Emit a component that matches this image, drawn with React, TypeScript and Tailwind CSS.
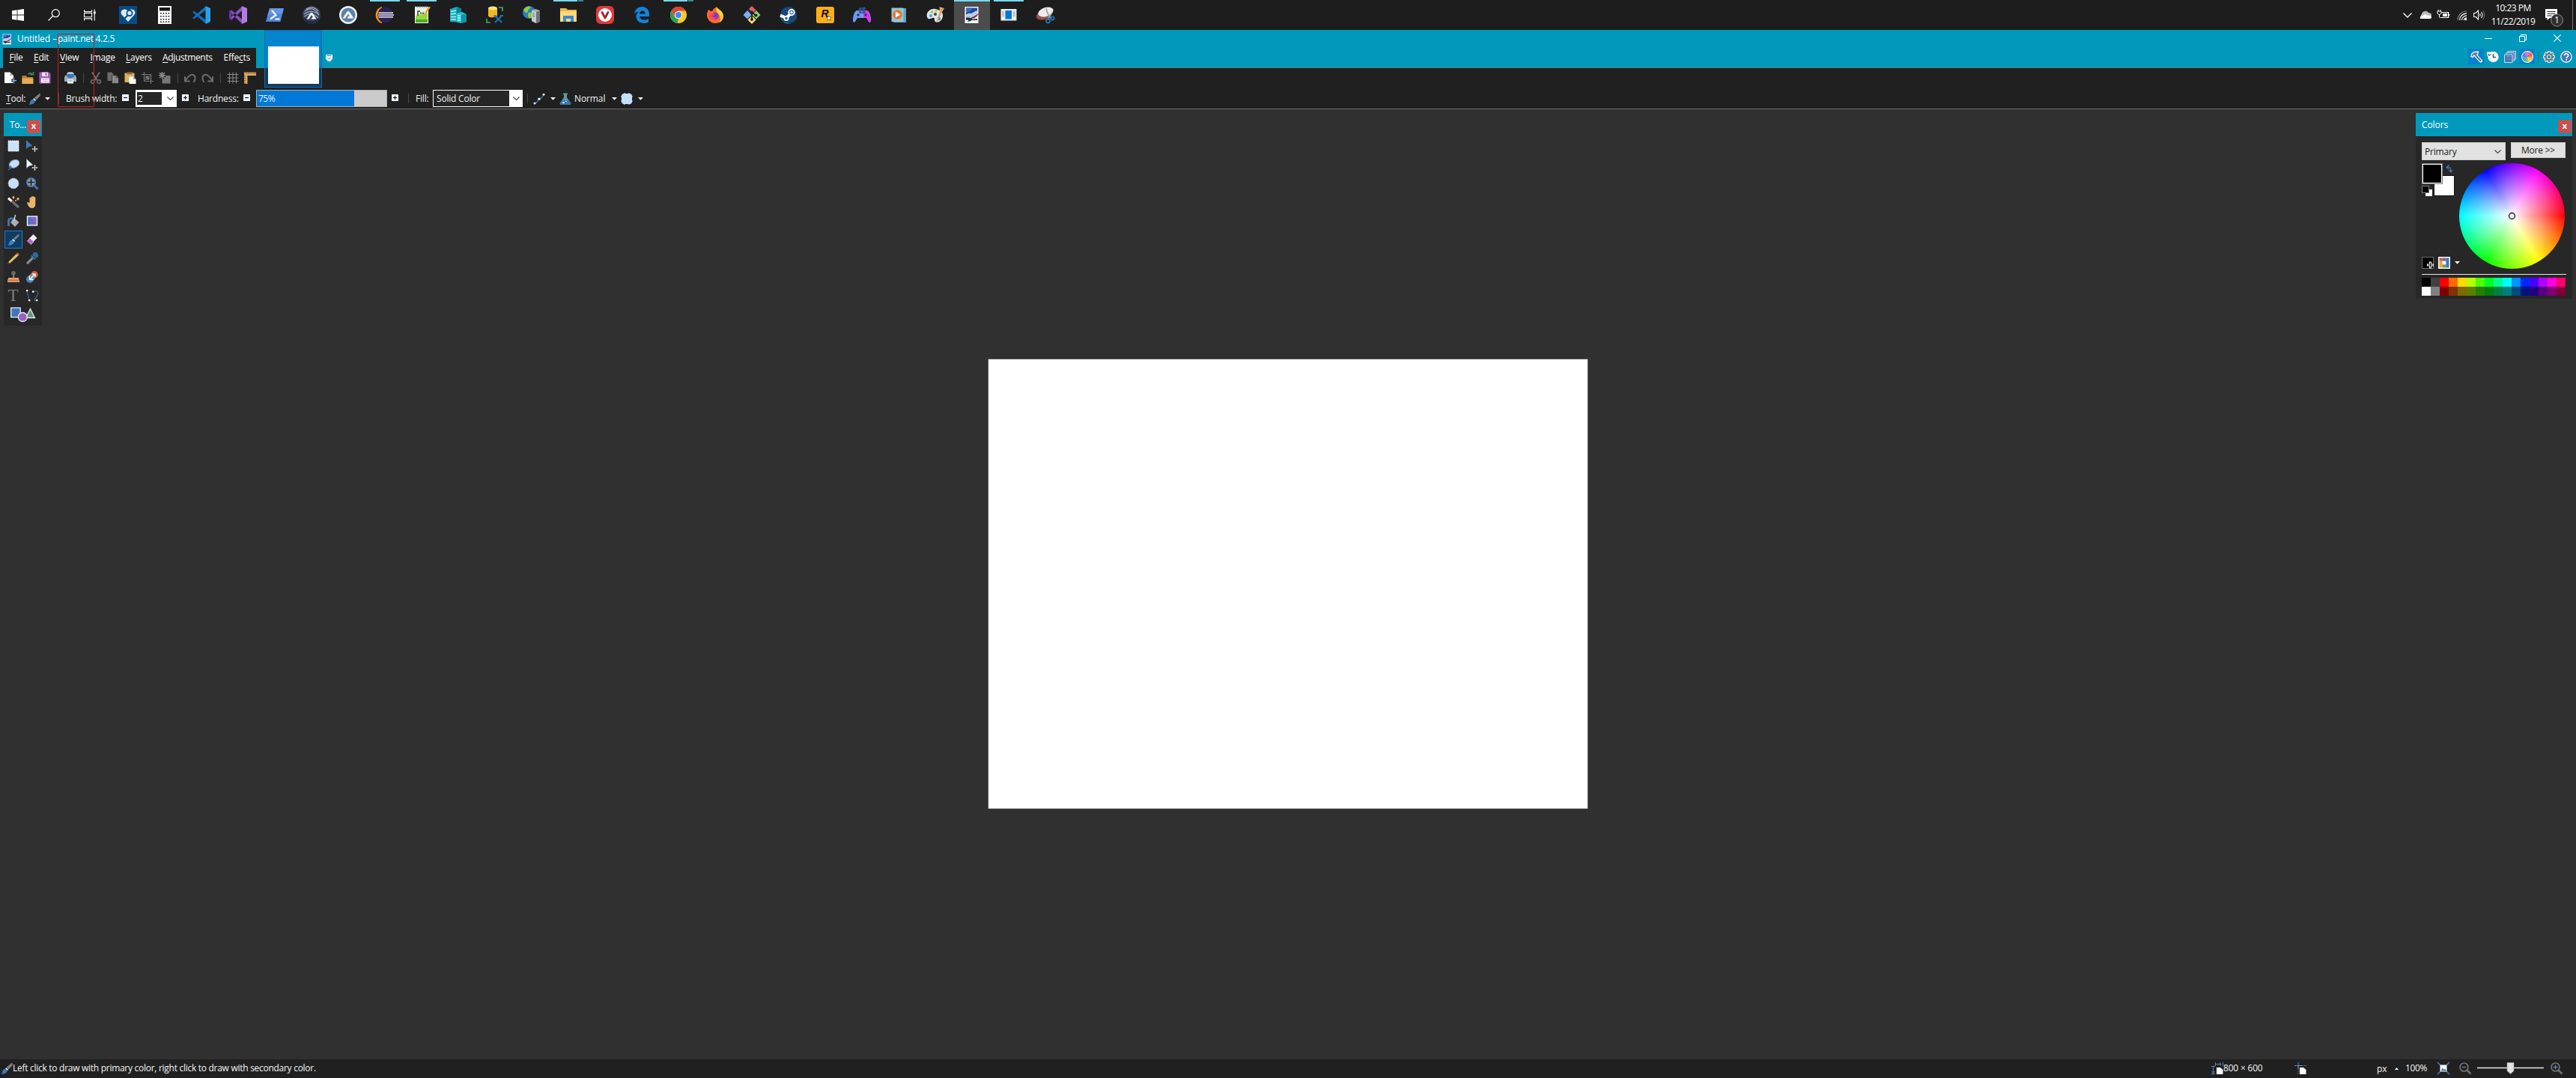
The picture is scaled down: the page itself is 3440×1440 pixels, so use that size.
import React from "react";

type P = { children?: React.ReactNode; c?: string; vb?: string };

const Svg = ({ children, c = "h-4 w-4", vb = "0 0 16 16" }: P) => (
  <svg viewBox={vb} className={`${c} block shrink-0 overflow-visible`} fill="none">
    {children}
  </svg>
);
const Svg24 = ({ children }: { children: React.ReactNode }) => (
  <Svg c="h-6 w-6" vb="0 0 24 24">{children}</Svg>
);

/* ---------- shared small glyphs ---------- */
const Brush = () => (
  <Svg>
    <path d="M15.500.300 15.800 4l-5 5.200-3-2.600z" fill="#7d7d7d" />
    <path d="m7.400 7 2.800 2.600-1.200 1.600-3-2.700z" fill="#c9d6e6" />
    <path d="M5.800 8.800 8.600 11.300C8.400 14.600 5 16 0 15.700c2.400-1.200 1.800-2.700 2.700-4.600.6-1.400 1.800-2.200 3.100-2.300z" fill="#3f78b8" />
  </Svg>
);
const Caret = () => (
  <Svg c="h-[4px] w-[7px]" vb="0 0 7 4"><path d="M0 0h7L3.500 3.800z" fill="#f0f0f0" /></Svg>
);
const Sign = ({ plus = false }) => (
  <div className="pb-[2px]">
    <Svg c="h-[9px] w-[9px]" vb="0 0 9 9">
      <rect width="9" height="9" rx=".6" fill="#eef4ff" />
      <path d="M2 4.500h5" stroke="#101820" strokeWidth="1.200" />
      {plus && <path d="M4.500 2v5" stroke="#101820" strokeWidth="1.200" />}
    </Svg>
  </div>
);
const Chevron = () => (
  <Svg c="h-[5px] w-[9px]" vb="0 0 9 5"><path d="m.5.5 4 4 4-4" stroke="#444" strokeWidth="1.100" /></Svg>
);
const PaintNet = () => (
  <>
    <rect x="2.500" y="1" width="18" height="22" fill="#f5f7fa" />
    <rect x="4" y="2.500" width="15" height="12" fill="#1d4b9b" />
    <path d="M4 2.500h9l-3 4-6 3z" fill="#3f6dbb" />
    <path d="M4 12c3-4 6-1 9-3s4-3 6-2v7.500H4z" fill="#b9cdec" />
    <path d="M4 15.500h5l3 2.500 7-1v2H9l-5-.500z" fill="#1b2130" />
    <path d="M24 8 14.500 17l-2.500-1.500z" fill="#9b1f3c" />
    <path d="m14 15-3.500 5-4.500 1 3.500-5z" fill="#21304f" />
  </>
);

/* ---------- taskbar ---------- */
type Task = { icon: React.ReactNode; run?: "one" | "many" | "active" };

const AutoIt = ({ dark = false }) => (
  <>
    <circle cx="12" cy="12" r="12" fill={dark ? "#39445f" : "#f2f4f6"} />
    {dark ? (
      <>
        <path d="M3 7c6-5 13-4 18 3M2 11c6-5 14-5 20 1M2 15c5-6 12-6 19 1M5 4c6-3 12-2 16 3" stroke="#a6abb8" strokeWidth="1.100" />
        <path d="M1 12a11 11 0 0 0 22 2c-3 4-5 6-11 6S3 17 1 12z" fill="#161b33" opacity=".6" />
        <path d="m5.500 17.500 5-8q1.500-1.500 3 0l5 8h-7l1.500-2.500h1L12 12l-3.500 5.500z" fill="#f4f4f4" />
      </>
    ) : (
      <>
        <circle cx="12" cy="12" r="9.600" fill="#5b82ad" />
        <path d="M4.500 16.500 10.500 7.500q1.500-1.500 3 0l6 9h-9l2-3h1.500L12 10.500l-4 6z" fill="#f7f7f7" />
      </>
    )}
  </>
);

const tasks: Task[] = [
  {
    icon: (
      <>
        <rect width="24" height="24" fill="#0b4a82" />
        <path d="M12 21 3.500 11.500C0 6.500 7 1.500 12 6.500c5-5 12 0 8.500 5z" fill="#d9ebf8" />
        <circle cx="14" cy="9.500" r="3.600" stroke="#0b4a82" strokeWidth="1.800" />
        <path d="m11.500 12.500-5 5" stroke="#0b4a82" strokeWidth="2.200" />
      </>
    ),
  },
  {
    icon: (
      <>
        <rect x="3" width="18" height="24" fill="#fff" />
        <rect x="5" y="2" width="14" height="4.500" fill="#181818" />
        {[9, 13, 17, 20.5].map((y) =>
          [6, 9.5, 13, 16.5].map((x) => <rect key={`${x}-${y}`} x={x} y={y} width="1.800" height="1.500" fill="#181818" />),
        )}
      </>
    ),
  },
  {
    icon: (
      <>
        <path d="M0 8.200 2 6.500l17 13-1.500 4z" fill="#0f6cb3" />
        <path d="M0 16 2 17.500 19 4.500 17.500.500z" fill="#1272b8" />
        <path d="M17.500 0 24 3v18l-6.500 3z" fill="#2ba1e8" />
      </>
    ),
  },
  {
    icon: (
      <>
        <path d="M0 7 3 5.500l15 13-1 5zM0 17l3 1.500 15-13L17 .5z" fill="#8a4fc4" />
        <path d="M0 7 3 5.500v13L0 17z" fill="#6d2fae" />
        <path d="M17 0 24 3v18l-7 3z" fill="#b17be4" />
      </>
    ),
  },
  {
    icon: (
      <>
        <path d="M5 3h19l-4.500 18H0z" fill="#4f86de" />
        <path d="M5 3h19l-2 8C15 8 9 12 2 13z" fill="#79a5ea" opacity=".5" />
        <path d="m8 6 5.500 6L6 17.500M12.500 17.500h6" stroke="#fff" strokeWidth="2.200" />
      </>
    ),
  },
  { icon: <AutoIt dark /> },
  { icon: <AutoIt /> },
  {
    run: "one",
    icon: (
      <>
        <path d="M8 1.500A11 11 0 0 0 8 22.500 12 12 0 0 1 8 1.500z" fill="#f7941e" stroke="#f7941e" strokeWidth="1.300" />
        <circle cx="13" cy="12" r="10.300" fill="#2c2255" />
        <path d="M3.500 9.300H23M3 12h21M3.500 14.800H23" stroke="#f4f0fa" strokeWidth="1.600" />
      </>
    ),
  },
  {
    run: "one",
    icon: (
      <>
        <path d="M3 1h18v22H3z" fill="#e9f1e4" />
        <path d="M4 13c6-3 11-2 16-3v12H4z" fill="#8fdc3c" />
        <path d="M4 18h16v4H4z" fill="#49ad22" />
        <path d="M3 1.500h18" stroke="#9ba7a0" strokeDasharray="1.500 1.500" strokeWidth="2" />
        <path d="M7 6v7M8 7h2M10 9.500h2M13 9.500h2" stroke="#222" strokeWidth="1.300" />
        <path d="M24 1.500 16 14l-2 1 .5-3L21 1z" fill="#e7a431" />
        <path d="M3.500 1v21.500h17V9" stroke="#f6f6f6" />
      </>
    ),
  },
  {
    icon: (
      <>
        <path d="m1 4 9-3 6 2.500V22L1 21z" fill="#17a9bd" />
        <path d="m10 1 6 2.500V22l-6 .5z" fill="#0c8395" />
        <path d="M2 7.500 9 6M2 11l7-1M2 14.500h7M2 18h7" stroke="#b8f4f7" strokeWidth="1.500" />
        <path d="m10 10 7-2 6 3v10l-7 2-6-2z" fill="#25c4d4" />
        <path d="m16 11.500 7-.5v10l-7 2z" fill="#0f93a6" />
        <path d="M11 13h4M11 16h4M11 19h4" stroke="#c6fafc" strokeWidth="1.300" />
      </>
    ),
  },
  {
    icon: (
      <>
        <path d="M3 3v10c0 3 11 3 12 0V3z" fill="#f4b81c" />
        <ellipse cx="9" cy="3" rx="6" ry="2.500" fill="#ffe277" />
        <path d="M17 2h5v5M1 17v5h5" stroke="#4fa557" strokeWidth="1.700" />
        <path d="m12 13 9 9M21 13l-9 9" stroke="#1c6fb8" strokeWidth="2.300" />
        <path d="M10 13.500h4M19 13h4" stroke="#1c6fb8" strokeWidth="1.800" />
      </>
    ),
  },
  {
    icon: (
      <>
        <circle cx="8.500" cy="8.500" r="8.500" fill="#2e7bc4" />
        <path d="M1 5c3-4 6-5 9-4 1 3-3 3-3 6s-4 3-6-2zM8 9c3-1 6 0 6 3s-3 5-5 4-3-5-1-7z" fill="#8ccf3c" />
        <path d="m12 6 5-2 6 2v15l-5 2-6-3z" fill="#a9adb1" />
        <path d="m18 8 5-2v15l-5 2z" fill="#6d7377" />
        <path d="m12 6 6 2v15l-6-3z" fill="#c7cacd" />
        <path d="m13 10 3 1M13 13l3 1" stroke="#666" />
      </>
    ),
  },
  {
    run: "many",
    icon: (
      <>
        <path d="M1 3h8l2 2h12v16H1z" fill="#e9b44a" />
        <path d="M1 7h22v14H1z" fill="#ffd978" />
        <path d="M5 13h14v8h-4v-4H9v4H5z" fill="#3b8ad0" />
      </>
    ),
  },
  {
    icon: (
      <>
        <rect width="24" height="24" rx="6" fill="#e0393e" />
        <circle cx="12" cy="12" r="9" fill="#fff" />
        <path d="m8 8.500 4 7.500 4-7.500" stroke="#a5252c" strokeWidth="2.800" strokeLinecap="round" strokeLinejoin="round" />
      </>
    ),
  },
  {
    icon: (
      <path
        d="M2 10.500C3 4.500 7 1 12.500 1 18.500 1 22 5.500 22 11v3H9c.4 3 3 4.500 6.500 4.500 2.300 0 4-.5 5.500-1.500v4.500c-2 1-4 1.500-6.500 1.500C8.500 23 4.500 19 4.500 14c0-2.500 1.200-5 3.500-6.500-2.500.2-4.500 1-6 3zM9 10.500h7.500C16.500 8 15 6.500 13 6.500s-3.600 1.500-4 4z"
        fill="#1282dc"
      />
    ),
  },
  {
    run: "many",
    icon: (
      <>
        <circle cx="12" cy="12" r="11" fill="#fbc91d" />
        <path d="M2.500 6.500A11 11 0 0 1 21.500 6.500H12L7.500 14.500z" fill="#e04336" />
        <path d="M2.500 6.500 7.300 14.700 12 17 10.500 23A11 11 0 0 1 2.500 6.500z" fill="#2fa250" />
        <circle cx="12" cy="12" r="5.200" fill="#f3f3f3" />
        <circle cx="12" cy="12" r="4" fill="#4688ef" />
      </>
    ),
  },
  {
    icon: (
      <>
        <path d="M3 5c2 1 3 2 5 2 2-4 5-5 6-6 0 3 8 4 9 12 0 7-5 10-11 10S1 18 1 12c0-3 1-5 2-7z" fill="#ff6a2a" />
        <path d="M14 1c0 3 8 4 9 12 0 4-2 7-5 9 2-5 1-9-2-12-2-2-3-5-2-9z" fill="#ffd33d" />
        <circle cx="11.500" cy="13.500" r="5" fill="#7a3bd1" />
        <path d="M4 10c3-1 5-1 8 1-2 1-2 2-4 2 1 3 4 3 6 2-1 4-8 4-10-1z" fill="#ff4a5a" />
      </>
    ),
  },
  {
    icon: (
      <>
        <path d="m12 0 5.500 5.500L12 11 6.500 5.500z" fill="#e85f5a" />
        <path d="m6 6 5.500 6L6 17.500.5 12z" fill="#77b1ef" />
        <path d="m18 6 5.500 6-5.500 5.500-5.500-5.500z" fill="#8bd36b" />
        <path d="m12 13 5.500 5.500L12 24l-5.500-5.500z" fill="#ffe36b" />
        <path d="M6 3.500 12 9v10M12 8l5.500 5" stroke="#222" strokeWidth="1.800" />
        <circle cx="12" cy="8.500" r="2" fill="#222" /><circle cx="12" cy="18" r="2" fill="#222" /><circle cx="17.500" cy="12.500" r="2" fill="#222" />
      </>
    ),
  },
  {
    icon: (
      <>
        <circle cx="12" cy="12" r="11" fill="#17477d" />
        <path d="M1 12A11 11 0 0 0 23 13.500L20 21Q12 26 4 20z" fill="#1c82bd" />
        <path d="m1 12.500 8 3.500 6-6" stroke="#fff" strokeWidth="4" />
        <circle cx="16" cy="8.500" r="4.700" fill="#fff" /><circle cx="16" cy="8.500" r="2.700" fill="#17477d" /><circle cx="16" cy="8.500" r="1.800" fill="#fff" />
        <circle cx="9" cy="16.500" r="3.500" fill="#fff" /><circle cx="9" cy="16.500" r="1.700" fill="#1b6098" />
      </>
    ),
  },
  {
    icon: (
      <>
        <rect y="1" width="24" height="22" rx="3" fill="#fcaf17" />
        <text x="6.500" y="14.500" fontSize="14" fontWeight="900" fontStyle="italic" fontFamily="Liberation Sans, sans-serif" fill="#111">R</text>
        <path d="m17 13 1 2 2.200.3-1.600 1.600.4 2.300-2-1.200-2 1.200.4-2.300-1.600-1.600 2.200-.3z" fill="#fff" stroke="#111" strokeWidth=".5" />
      </>
    ),
  },
  {
    icon: (
      <>
        <path d="M5 6h14c4 2 5 9 5 14-1 3-3 2-4-1l-2-3H6l-2 3c-1 3-3 4-4 1C0 15 1 8 5 6z" fill="#6c9af2" />
        <path d="M14 6h5c4 2 5 9 5 14-1 3-3 2-4-1l-2-3h-4z" fill="#d33ce8" />
        <path d="m8 2.500 3.500-.5v3.500H8zM12.500 2l4-.5v4h-4zM8 6.500h3.500V10L8 9.500zM12.500 6.500h4v4l-4-.5z" fill="#36539a" />
        <circle cx="7" cy="12" r="1.800" fill="#28396b" /><circle cx="17" cy="12" r="1.800" fill="#5a1f78" />
      </>
    ),
  },
  {
    icon: (
      <>
        <path d="M5 3h17v19H5z" fill="#5fa6c3" /><path d="M2.500 2.500h16v18.500h-16z" fill="#93c6da" />
        <circle cx="10.500" cy="11.500" r="6.300" fill="#e8752a" /><path d="m8 7.500 6.500 4L8 15.500z" fill="#fff" />
      </>
    ),
  },
  {
    icon: (
      <>
        <path d="M1 15C-1 8 6 3 12 4s11 4 10 10-6 9-10 7c-2-1 0-4-2-5s-7 4-9-1z" fill="#dfe5ea" />
        <circle cx="6" cy="13" r="2" fill="#4aa3e0" /><circle cx="7.500" cy="8" r="1.800" fill="#9ac93c" /><circle cx="13" cy="6.500" r="1.800" fill="#e8c33c" />
        <circle cx="12" cy="11" r="2" fill="#3b4650" /><circle cx="17" cy="17" r="2.200" fill="#4d8ccd" />
        <path d="M17.500 1 24 3l-3 5-7 14-1 0 5-14z" fill="#d8a35c" />
      </>
    ),
  },
  { run: "active", icon: <PaintNet /> },
  {
    run: "one",
    icon: (
      <>
        <rect x="1.500" y="4" width="21" height="15.500" fill="#e9edf1" />
        <rect x="7.500" y="6" width="8.500" height="11.500" fill="#0078d7" />
        <path d="M3 8h3M3 10.500h3M3 13h3M17.500 8H21M17.500 10.500H21M17.500 13H21" stroke="#8b98a6" />
      </>
    ),
  },
  {
    icon: (
      <>
        <ellipse cx="10" cy="12" rx="10.500" ry="6" transform="rotate(-18 10 12)" fill="#96504f" />
        <ellipse cx="12.500" cy="8" rx="10.500" ry="6" transform="rotate(-18 12.500 8)" fill="#eee9ea" />
        <path d="M13 3c1 6 4 11 7 14M21 9l-6 9" stroke="#9a9fa6" strokeWidth="1.600" />
        <circle cx="15.500" cy="20" r="2.500" stroke="#2474b3" strokeWidth="1.800" /><circle cx="21.500" cy="16.500" r="2.200" stroke="#2474b3" strokeWidth="1.800" />
      </>
    ),
  },
];

const Taskbar = () => (
  <header className="flex h-10 shrink-0 bg-[#1d1d1d]">
    <div className="flex h-10 w-12 items-center justify-center">
      <Svg><path d="M0 2.300 6.600 1.300v6.200H0zM7.400 1.200 16 0v7.500H7.400zM0 8.400h6.600v6.300L0 13.700zM7.400 8.400H16V16l-8.600-1.200z" fill="#fff" /></Svg>
    </div>
    <div className="flex h-10 w-12 items-center justify-center">
      <Svg><circle cx="10.300" cy="5.700" r="5" stroke="#fff" strokeWidth="1.200" /><path d="M6.700 9.300.4 15.600" stroke="#fff" strokeWidth="1.300" /></Svg>
    </div>
    <div className="mr-[3px] flex h-10 w-12 items-center justify-center">
      <Svg>
        <path d="M.6 1v2.600h10V1M.6 15.500v-2.600h10v2.600M.6 5.500h10v5.300H.6zM14.300.5v15" stroke="#fff" strokeWidth="1.100" />
        <path d="M12.800 3.500h3v2.800h-3z" fill="#fff" />
      </Svg>
    </div>
    <div className="flex gap-px">
      {tasks.map((t, i) => (
        <div key={i} className={`flex h-10 w-12 flex-col items-center ${t.run === "active" ? "bg-[#4c4c4c]" : ""}`}>
          <div className={`mb-[6px] flex h-[2px] justify-end ${t.run === "active" ? "w-12 bg-[#76d9f0]" : t.run ? "w-10 bg-[#76d9f0]" : "w-10"}`}>
            {t.run === "many" && <div className="w-2 border-l border-[#1d1d1d] bg-[#3f8798]" />}
          </div>
          <Svg24>{t.icon}</Svg24>
        </div>
      ))}
    </div>
    <div className="ml-auto flex items-center pr-[4px] text-white">
      <Svg c="h-[7px] w-3" vb="0 0 12 7"><path d="m.5.5 5.500 5.500 5.500-5.500" stroke="#fff" strokeWidth="1.300" /></Svg>
      <div className="ml-[10px]"><Svg><path d="M3 12a3 3 0 0 1 0-5 5 5 0 0 1 9-2 3.500 3.500 0 0 1 4 3.500A3 3 0 0 1 13 12z" fill="#b9b9b9" /><path d="M1 13c-1-3 1-4 3-3.500 2-3 5-2.500 6-1 3-.5 6 1 6 2.500s-1 2-2 2z" fill="#fff" /></Svg></div>
      <div className="ml-[8px]">
        <Svg>
          <path d="M5.500 4.500h9v7H3.500M15.500 6.500v3" stroke="#fff" strokeWidth="1.200" /><path d="M7 6h6v4H7z" fill="#fff" />
          <path d="M0 3h5v3L3.500 7.500h-2L0 6zM1 1v2M4 1v2M2.500 7v4.500" stroke="#fff" />
        </Svg>
      </div>
      <div className="ml-[10px]">
        <Svg>
          <path d="M1 15A12 12 0 0 1 13 3" stroke="#888" strokeWidth="1.200" /><path d="M3.500 15A9.500 9.500 0 0 1 13 5.800M6.500 15A6.500 6.500 0 0 1 13 8.800M9.500 15A3.500 3.500 0 0 1 13 11.800" stroke="#fff" strokeWidth="1.200" />
          <circle cx="12" cy="14" r="1.300" fill="#fff" />
        </Svg>
      </div>
      <div className="ml-[6px]">
        <Svg>
          <path d="M.6 5.500H3L6.500 2v12L3 10.500H.6z" stroke="#fff" strokeWidth="1.100" /><path d="M8.500 6q1.500 2 0 4M10.500 4q3 4 0 8" stroke="#fff" strokeWidth="1.100" /><path d="M12.800 2q4 6 0 12" stroke="#777" />
        </Svg>
      </div>
      <div className="ml-[6px] flex w-[62px] flex-col items-center text-[12px] leading-[18px] tracking-[-0.5px]">
        <span>10:23 PM</span>
        <span>11/22/2019</span>
      </div>
      <div className="ml-[12px] mt-[8px]">
        <Svg c="h-6 w-6" vb="0 0 24 24">
          <path d="M0 0h16v12H6l-3.500 3v-3H0z" fill="#fff" /><path d="M2.500 3.500h11M2.500 6.300h11M2.500 9h6" stroke="#222" strokeWidth="1.100" />
          <circle cx="15.500" cy="15" r="8" fill="#303030" stroke="#8d8d8d" />
          <text x="15.500" y="19.300" textAnchor="middle" fontSize="12" fill="#fff" fontFamily="Open Sans, sans-serif">1</text>
        </Svg>
      </div>
      <div className="ml-[12px] h-10 w-px bg-[#777]" />
    </div>
  </header>
);

/* ---------- title bar and menu ---------- */
const menus: [string, string, string, string][] = [
  ["", "F", "ile", "w-[32.500px]"],
  ["", "E", "dit", "w-[35px]"],
  ["", "V", "iew", "w-[40.500px]"],
  ["", "I", "mage", "w-[47.500px]"],
  ["", "L", "ayers", "w-[49px]"],
  ["", "A", "djustments", "w-[81.500px] tracking-[-0.35px]"],
  ["Effe", "c", "ts", "w-[40px]"],
];

const gearTeeth = [0, 45, 90, 135, 180, 225, 270, 315];

const TitleBar = () => (
  <section className="flex h-[51px] shrink-0 justify-between border-b border-[#5f7478] bg-[#0099bc]">
    <div>
      <div className="flex h-6 items-center pl-[2px] text-[12px] text-white">
        <Svg c="h-[15px] w-[15px]" vb="0 0 24 24"><PaintNet /></Svg>
        <span className="ml-[6px] w-[54px] whitespace-nowrap tracking-[-0.1px]">Untitled –</span>
        <span className="whitespace-nowrap tracking-[-0.28px]">paint.net 4.2.5</span>
      </div>
      <nav className="ml-1 flex h-[27px] w-[338px] items-center bg-[#202020] pb-px pl-[8.500px] text-[12px] tracking-[-0.25px] text-white">
        {menus.map(([a, k, b, w]) => (
          <span key={k} className={`${w} shrink-0 whitespace-nowrap`}>{a}<u className="underline-offset-2">{k}</u>{b}</span>
        ))}
      </nav>
    </div>
    <div className="flex flex-col items-end">
      <div className="flex h-[22px] items-center gap-[36px] pr-[20px]">
        <Svg c="h-[10px] w-[10px]" vb="0 0 10 10"><path d="M0 5.500h10" stroke="#fff" /></Svg>
        <Svg c="h-[10px] w-[10px]" vb="0 0 10 10"><path d="M.5 2.500h7v7h-7zM2.500 2.500v-2h7v7h-2" stroke="#fff" /></Svg>
        <Svg c="h-[10px] w-[10px]" vb="0 0 10 10"><path d="m.3.3 9.400 9.400M9.700.3.300 9.700" stroke="#fff" strokeWidth="1.100" /></Svg>
      </div>
      <div className="mt-[3px] flex h-[21px] items-center pr-[5px]">
        <div className="flex h-[21px] w-[21px] items-center justify-center bg-[#0083cc]">
          <Svg>
            <path d="m7.500 6.500 6.500 7" stroke="#fff" strokeWidth="4.200" strokeLinecap="round" />
            <path d="M.8 7.500C.8 3 4 .8 10.500 1.200L9.500 5 6.500 7.500 4.500 6 3.500 8.500z" fill="#6d7f8c" stroke="#fff" strokeWidth="1.200" />
            <path d="m7 6 7 7.500" stroke="#5d6d79" strokeWidth="2" />
          </Svg>
        </div>
        <div className="ml-[4px]">
          <Svg><circle cx="8.500" cy="8" r="7.200" fill="#fff" /><path d="M8.500 4v4.500H12" stroke="#40525e" strokeWidth="1.500" /><path d="M0 1.500h5.500V7L0 6z" fill="#fff" /><path d="M1 3.500 3 6l2.500-1.500" stroke="#40525e" strokeWidth="1.200" /></Svg>
        </div>
        <div className="ml-[7px]">
          <Svg><path d="M5 .5h10.500V11H5z" fill="#4679b4" stroke="#c9dcef" /><path d="M3 2.500h10.500V13H3z" fill="#4679b4" stroke="#c9dcef" /><path d="M.5 5H11v10.500H.5z" fill="#4679b4" stroke="#c9dcef" /><path d="M3 7.500h8V5M5 5v6h8V3" stroke="#7ea5d0" strokeWidth=".6" /></Svg>
        </div>
        <div className="ml-[4px] flex h-[21px] w-[21px] items-center justify-center bg-[#0083cc]">
          <div className="h-4 w-4 rounded-full border border-white bg-[conic-gradient(from_0deg,#f28ba0,#ef5350_60deg,#ff9f43_100deg,#f6d55c_150deg,#5ac97c_190deg,#4ea9e0_250deg,#8a6fe8_300deg,#d67be0)]" />
        </div>
        <div className="ml-[4px] h-[15px] w-px bg-[#2a6f84]" />
        <div className="ml-[6px]">
          <Svg>
            {gearTeeth.map((r) => <path key={r} d="M8 4V.2" stroke="#fff" strokeWidth="4" transform={`rotate(${r} 8 8)`} />)}
            <circle cx="8" cy="8" r="4.200" stroke="#fff" strokeWidth="4.200" />
            {gearTeeth.map((r) => <path key={r} d="M8 4V1" stroke="#65737b" strokeWidth="2" transform={`rotate(${r} 8 8)`} />)}
            <circle cx="8" cy="8" r="4.200" stroke="#65737b" strokeWidth="2.200" />
            <circle cx="8" cy="8" r="2.200" fill="#0099bc" />
          </Svg>
        </div>
        <div className="ml-[7px]">
          <Svg><circle cx="8" cy="8" r="7.200" fill="#3f78b8" stroke="#e8f0f8" strokeWidth="1.400" /><path d="M5.500 6.200C5.500 3 10.700 3 10.700 6c0 2-2.500 2-2.500 4M8.200 11v1.800" stroke="#fff" strokeWidth="1.700" /></Svg>
        </div>
      </div>
    </div>
  </section>
);

/* ---------- main toolbar ---------- */
const Sep = () => <div className="mx-[5px] h-[14px] w-px shrink-0 bg-[#484848]" />;

const actions: (React.ReactNode | "sep")[] = [
  <><path d="M0 .5h7.500L12 5v10H0z" fill="#fff" /><path d="M7.500.5V5H12z" fill="#a8b4c0" /><path d="M12.500 8v7M9 11.500h7" stroke="#202020" strokeWidth="3" /><path d="M12.500 8v7.500M8.800 11.700h7.200" stroke="#8fb6d8" strokeWidth="1.300" /></>,
  <><path d="M.5 5H6l1.500 2H15v9H.5z" fill="#b67e2e" /><path d="M.5 8.500h15V16H.5z" fill="#e6ad55" /><path d="M8.500 3.500C10 1 13 1 14 4M11.500 3.500h4V0" stroke="#3c9a74" strokeWidth="1.500" /></>,
  <><path d="M.5.5h13L15.500 3v12.500H.5z" fill="#a45fc0" /><path d="M4 .5h8V6H4z" fill="#efe4f5" /><path d="M8.500 1.500h2v3.500h-2z" fill="#a45fc0" /><path d="M3 8.500h10.500v6H3z" fill="#fff" /><path d="M4.500 10.500h7.500M4.500 12.500h7.500" stroke="#b99cc8" /></>,
  "sep",
  <><path d="M3.500 2 5 .5h6L12.500 2v4h-9z" fill="#e8edf3" /><path d="M1.500 4.500h13L16 7v6H0V7z" fill="#9eacbb" /><path d="M4 2.500h8l1 3.500-2 2H5L3 6z" fill="#3779bd" /><path d="M4 10h8v5.500H4z" fill="#f6f8fa" /><path d="M5 12h6" stroke="#68a5dc" strokeWidth="1.300" /></>,
  "sep",
  <><path d="M3 .5 9.500 11M13 .5 6.500 11" stroke="#707070" strokeWidth="2" /><circle cx="3.800" cy="13" r="2.300" stroke="#707070" strokeWidth="1.500" /><circle cx="12.200" cy="13" r="2.300" stroke="#707070" strokeWidth="1.500" /></>,
  <><path d="M.5.500H6L9 3.500V12H.5z" fill="#6c6c6c" /><path d="M6.500 4.500H12l3.500 3.500v7.500h-9z" fill="#898989" stroke="#202020" strokeWidth=".7" /><path d="M12 4.500V8h3.500" stroke="#444" /></>,
  <><path d="M.5 1.500h13V14H.5z" fill="#deae61" /><path d="M3.500.3h7v3h-7z" fill="#8b6a36" /><path d="M6.500 6.500H12l3.500 3.500v6h-9z" fill="#fff" /><path d="M12 6.500V10h3.500z" fill="#93a5b5" /></>,
  <><path d="M3.500 0v12.500H16M0 3.500h12.500V16" stroke="#777" strokeWidth="1.200" /><path d="M5.500 5.500h5v5h-5z" fill="#777" /><path d="M14 2 3 13" stroke="#555" strokeWidth=".7" /></>,
  <><path d="M4.500 5h11v10.500h-11z" fill="#767676" /><path d="m1 1 7 7M8 1 1 8" stroke="#202020" strokeWidth="4.500" /><path d="m1 1 7 7M8 1 1 8M4.500 0v9M0 4.500h9" stroke="#858585" strokeWidth="1.700" /></>,
  "sep",
  <path d="M1 6v6.500h6.500M1.500 12C5 6 9 3 12 4s3.500 6 .5 10" stroke="#6c6c6c" strokeWidth="2" />,
  <path d="M15 6v6.500H8.500M14.500 12C11 6 7 3 4 4S.5 10 3.500 14" stroke="#6c6c6c" strokeWidth="2" />,
  "sep",
  <path d="M3.500.5v15M8 .5v15M12.500.5v15M.5 3.500h15M.5 8h15M.5 12.500h15" stroke="#8b8b8b" />,
  <><path d="M0 .5h16V5H4.500v11H0z" fill="#deac62" /><path d="M3 .5V3M6 .5V3M9 .5V3M12 .5V3M14.500.5V3M0 6h2.500M0 9h2.500M0 12h2.500M0 15h2.500" stroke="#5f4318" strokeWidth=".8" /></>,
];

const MainToolbar = () => (
  <div className="flex h-[27px] items-center pb-px pl-[2.500px]">
    {actions.map((a, i) =>
      a === "sep" ? <Sep key={i} /> : <div key={i} className="flex w-[23px] shrink-0 justify-center"><Svg>{a}</Svg></div>,
    )}
  </div>
);

const ToolOptions = () => (
  <div className="flex h-[27px] items-center text-[12px] tracking-[-0.2px] text-[#f2f2f2]">
    <span className="ml-[8px] w-[30px] whitespace-nowrap"><u className="underline-offset-2">T</u>ool:</span>
    <Brush />
    <div className="ml-[6px] w-[7px]"><Caret /></div>
    <div className="ml-[11px] h-[15px] w-px bg-[#484848]" />
    <span className="ml-[9px] w-[75px] whitespace-nowrap">Brush width:</span>
    <Sign />
    <div className="ml-[9px] flex h-[23px] w-[55px] items-center border border-white bg-white">
      <div className="ml-px flex h-[17px] w-[33px] items-center bg-[#262626] pl-[1px]">2</div>
      <div className="ml-[7px]"><Chevron /></div>
    </div>
    <div className="ml-[7px]"><Sign plus /></div>
    <span className="ml-[12px] w-[61px] whitespace-nowrap">Hardness:</span>
    <Sign />
    <div className="ml-[8px] flex h-[23px] w-[175px] border border-[#adadad] bg-[#cbcbcb]">
      <div className="flex w-[130px] items-center bg-[#0078d7] pl-[2px] tracking-[-0.5px]">75%</div>
    </div>
    <div className="ml-[6px]"><Sign plus /></div>
    <div className="ml-[13px] h-[13px] w-px bg-[#484848]" />
    <span className="ml-[9px] w-[23px] whitespace-nowrap">Fill:</span>
    <div className="flex h-[23px] w-[120px] items-center border border-white bg-white">
      <div className="flex h-[21px] w-[101px] items-center bg-[#262626] pl-[4px]">Solid Color</div>
      <div className="ml-[5px]"><Chevron /></div>
    </div>
    <div className="ml-[6px] h-[13px] w-px bg-[#484848]" />
    <div className="ml-[7px]">
      <Svg><path d="M2 14C6 14 6 9 8 8s4 0 6-6" stroke="#3f78b8" strokeWidth="1.200" /><circle cx="2" cy="14" r="1.500" fill="#dbe9f8" /><circle cx="8" cy="8.300" r="1.700" fill="#dbe9f8" /><circle cx="14" cy="2.300" r="1.500" fill="#dbe9f8" /></Svg>
    </div>
    <div className="ml-[7px]"><Caret /></div>
    <div className="ml-[5px]">
      <Svg><path d="M5 .5h6v1.800H10v4l5.500 7.700-.8 1.800H1.300L.5 14 6 6.300v-4H5z" fill="#6398a1" /><path d="M3.500 10h9l3 4-.8 1.800H1.300L.5 14z" fill="#3775b5" /><circle cx="5.500" cy="13" r="1.300" fill="#fff" /><circle cx="9" cy="11.500" r=".8" fill="#fff" /></Svg>
    </div>
    <span className="ml-[4px] w-[50px] tracking-[-0.1px]">Normal</span>
    <Caret />
    <div className="ml-[5px]">
      <Svg><rect x="1" y="1" width="14" height="14" rx="3.500" fill="#c4e0fa" /><path d="M5 0v2M11 0v2M5 14v2M11 14v2M0 5h2M0 11h2M14 5h2M14 11h2" stroke="#d9ecfb" /></Svg>
    </div>
    <div className="ml-[7px]"><Caret /></div>
  </div>
);

/* ---------- tool palette ---------- */
const MoveCross = () => (
  <>
    <path d="M11.500 8.500v7M8 12h7" stroke="#e8e8e8" />
    <path d="m11.500 8 1.300 1.800h-2.600zM11.500 16l1.300-1.800h-2.600zM7.500 12l1.800-1.300v2.600zM15.500 12l-1.800-1.300v2.600z" fill="#e8e8e8" />
  </>
);

const tools: React.ReactNode[] = [
  <rect x="1" y="1" width="14" height="14" fill="#c9e3fb" stroke="#fff" strokeDasharray="1.500 1" />,
  <><path d="M0 0v12l3.500-3 5-1z" fill="#3f78b8" /><MoveCross /></>,
  <><ellipse cx="9" cy="6.800" rx="7" ry="5" transform="rotate(-25 9 6.800)" fill="#c4e0fa" stroke="#80a5c7" /><path d="M1 15.500c0-3 5-1 4-4.500-1-2-4-1-2 1" stroke="#3f78b8" strokeWidth="1.200" /></>,
  <><path d="M.5.5v12l3.500-3 5-1z" fill="#fff" stroke="#6ca0d0" strokeWidth=".6" /><MoveCross /></>,
  <circle cx="8" cy="8" r="6.800" fill="#c4e0fa" stroke="#e5f2fd" strokeDasharray="1.500 1" />,
  <><path d="m10.500 10.500 5 5" stroke="#3f78b8" strokeWidth="2.800" /><circle cx="6.500" cy="6.500" r="5.800" fill="#8f9ba8" stroke="#3f78b8" strokeWidth="1.600" /><path d="M6.500 2v9M2 6.500h9" stroke="#222" strokeWidth="1.700" /></>,
  <><path d="m2 3.500 13 11.500" stroke="#707070" strokeWidth="3.200" /><path d="m1 2.700 4.500 4" stroke="#fff" strokeWidth="3" /><path d="m8 0 1 1.500L8 3.500 6.800 1.500zM14 2l1.500 1.500L14 5.500l-1.500-2zM11 5l.8.8-.8.9-.8-.9z" fill="#e6b45c" stroke="#e6b45c" /></>,
  <path d="M4.500 9V3.200c0-1.500 1.800-1.500 1.800 0V1.700c0-1.500 2-1.500 2 0v-.5c0-1.500 2-1.500 2 0v1c0-1.500 2-1.500 2 .2V10c0 4-1.500 6-4.500 6-4 0-5-3-6.500-6.500-.6-1.500 1.200-2 2-1z" fill="#e9b768" />,
  <><path d="m8.500 4 7 6-5.500 6-6-6z" fill="#adadad" /><path d="M10.500 0 8.500 8" stroke="#ddd" strokeWidth="1.400" /><path d="M1.500 15V7.500c0-2 3-3.500 7-2" stroke="#3f78b8" strokeWidth="2.800" /></>,
  <><defs><linearGradient id="fillGrad"><stop stopColor="#3f78c4" /><stop offset="1" stopColor="#a05fc8" /></linearGradient></defs><rect x="1.500" y="2" width="13" height="12" fill="url(#fillGrad)" stroke="#fff" strokeWidth="1.300" /></>,
  <><path d="m15.500 0-.2 3.500-5 5-2.500-2z" fill="#7f7f7f" /><path d="m7.400 7 2.800 2.600-1.200 1.600-3-2.700z" fill="#d8e3ee" /><path d="M5.800 8.800 8.600 11.300C8.400 14.600 5 16 0 15.700c2.400-1.200 1.800-2.700 2.700-4.600.6-1.400 1.800-2.200 3.100-2.300z" fill="#3f83cd" /></>,
  <><path d="m9.500 1 5 5-5.500 5.500-5-5z" fill="#f7effb" /><path d="M5 6 10 11l-3.500 3.500-5-4.500z" fill="#b868cb" stroke="#efd8f5" strokeWidth=".7" /></>,
  <><path d="m13 1 2.500 2.500L4 14l-4 2 2-4z" fill="#e8bd70" /><path d="m13.500.3 2.200 2.200-1.800 1.800L11.700 2z" fill="#b96041" /><path d="m0 16 1.300-2.700L2.800 15z" fill="#333" /></>,
  <><path d="M10 0h3.500L16 2.500V6l-3.500 2L8 3.500z" fill="#2f6799" /><path d="m7.500 4 5 5-1.500 1-5-5z" fill="#3f83b8" /><path d="m7.500 6.500 2.200 2.200L3 15.500l-2.500.2.200-2.500z" fill="#818b93" /></>,
  <><circle cx="8" cy="2.800" r="2.800" fill="#696969" /><path d="M7 4h2.200v5H7z" fill="#777" /><path d="M1 9h14v2.500H1zM0 12.500h16V15H0z" fill="#ee955a" /><path d="M0 11.800h16" stroke="#ffd9bd" strokeWidth=".7" /></>,
  <><circle cx="11" cy="4.800" r="4.800" fill="#d9593d" /><circle cx="5" cy="11" r="5" fill="#4583b5" /><path d="M4.500 4.500h7v7h-7z" fill="#7f8f9c" /><path d="M11.500 4.500 5 11M4.500 6.500v5h5M8 4h4v4" stroke="#fff" strokeWidth="1.300" /></>,
  <text x="7.500" y="15.300" textAnchor="middle" fontSize="23" fontFamily="Liberation Serif, serif" fill="#7d7d7d">T</text>,
  <><path d="M1 1.500 4 14M9.500 2.500c10-3 6 6 2 10-2 3 2 2 3 1.500" stroke="#3e6591" strokeWidth="1.200" /><path d="M0 0h2.300v2.300H0zM3 13h2.300v2.300H3zM8 1.500h2.300v2.300H8zM13 13h2.300v2.300H13z" fill="#fff" /></>,
];

const CloseBox = () => (
  <div className="flex h-[18px] w-[18px] items-center justify-center bg-[#c75050] pb-[2px] text-[11px] font-bold text-white">x</div>
);

const ToolWindow = () => (
  <div className="flex h-[284px] w-[51px] shrink-0 flex-col bg-[#272727]">
    <div className="flex h-[31px] items-center justify-between bg-[#0099bc] pl-[8px] pr-[2px] text-[12px] text-white">
      <span className="w-[22px] whitespace-nowrap tracking-[-0.3px]">To...</span>
      <div className="pt-[5px]"><CloseBox /></div>
    </div>
    <div className="grid grid-cols-[25px_25px] pl-[1px]">
      {tools.map((t, i) => (
        <div key={i} className="flex h-[25px] items-end">
          <div className={`flex h-6 w-6 items-center justify-center ${i === 10 ? "border border-[#2a7ac0] bg-[#0d3c64]" : ""}`}><Svg>{t}</Svg></div>
        </div>
      ))}
    </div>
    <div className="ml-[9px] mt-[2px]">
      <Svg c="h-[20px] w-[34px]" vb="0 0 34 20">
        <rect x=".7" y="2.200" width="12.500" height="12.500" fill="#3f78b8" stroke="#e8f0f8" strokeWidth="1.300" />
        <path d="m26.500 3.500 6 12h-12z" fill="#5e9a82" stroke="#e1f0e9" strokeWidth="1.300" />
        <circle cx="16.300" cy="14.500" r="6" fill="#9a62b8" stroke="#f0e5f6" strokeWidth="1.300" />
      </Svg>
    </div>
  </div>
);

/* ---------- colors window ---------- */
const swatches = [
  "bg-[#000000]", "bg-[#404040]", "bg-[#ff0000]", "bg-[#ff6a00]", "bg-[#ffd800]", "bg-[#b6ff00]", "bg-[#4cff00]", "bg-[#00ff21]",
  "bg-[#00ff90]", "bg-[#00ffff]", "bg-[#0094ff]", "bg-[#0026ff]", "bg-[#4800ff]", "bg-[#b200ff]", "bg-[#ff00dc]", "bg-[#ff006e]",
  "bg-[#ffffff]", "bg-[#808080]", "bg-[#7f0000]", "bg-[#7f3300]", "bg-[#7f6a00]", "bg-[#5b7f00]", "bg-[#267f00]", "bg-[#007f0e]",
  "bg-[#007f46]", "bg-[#007f7f]", "bg-[#004a7f]", "bg-[#00137f]", "bg-[#21007f]", "bg-[#57007f]", "bg-[#7f006e]", "bg-[#7f0037]",
];

const ColorsWindow = () => (
  <div className="flex h-[248px] w-[209px] shrink-0 flex-col bg-[#272727]">
    <div className="flex h-[31px] items-center justify-between bg-[#0099bc] pl-[8px] pr-[1px] text-[12px] text-white">
      <span className="tracking-[-0.1px]">Colors</span>
      <div className="pt-[5px]"><CloseBox /></div>
    </div>
    <div className="mt-[8px] flex gap-[7px] px-[8px] text-[12px] text-[#1b1b1b]">
      <div className="flex h-[24px] w-[112px] items-center justify-between border border-[#cfcfcf] bg-[#e1e1e1] pl-[3px] pr-[5px] pt-px tracking-[-0.2px]">Primary<Chevron /></div>
      <div className="flex h-[21px] w-[73px] items-center justify-center border border-[#cfcfcf] bg-[#e1e1e1] tracking-[-0.2px]">More &gt;&gt;</div>
    </div>
    <div className="mt-[4px] flex pl-[8px]">
      <div className="flex w-[50px] flex-col justify-between">
        <Svg c="h-[46px] w-[46px]" vb="0 0 46 46">
          <rect x="16" y="16" width="28" height="28" fill="#111" /><rect x="17" y="17" width="26" height="26" fill="#fff" />
          <rect x=".5" y=".5" width="27" height="27" fill="#000" stroke="#777" /><rect x="1.500" y="1.500" width="25" height="25" fill="#000" stroke="#fff" />
          <path d="M34 5.500c4-1 5 1 5 6M36.500 2.500 33 5.500l3.500 2.500M36.500 9 39 12l2-3" stroke="#4b7ba4" strokeWidth="1.200" />
          <rect x="5" y="35" width="9" height="9" fill="#fff" /><rect x=".5" y="30.500" width="9" height="9" fill="#000" stroke="#808080" />
        </Svg>
        <div className="flex items-center">
          <Svg><rect x=".5" y=".5" width="15" height="15" fill="#000" stroke="#6b6b6b" /><path d="M11.500 6.500v9M7 11h9" stroke="#fff" strokeWidth="3" /><path d="M11.500 7.500v7M8 11h7" stroke="#111" /></Svg>
          <div className="ml-[6px]">
            <Svg><rect width="16" height="16" fill="#fff" /><path d="M1.500 1.500h4.300v4.300H1.500z" fill="#d45f3d" /><path d="M5.800 1.500h4.400v4.300H5.800z" fill="#7f5fa8" /><path d="M10.200 1.500h4.300v13h-4.300z" fill="#3f78b8" /><path d="M1.500 5.800h4.300v8.700H1.500z" fill="#e2a645" /><path d="M5.800 10.200h4.400v4.300H5.800z" fill="#62a05f" /><path d="M5.800 5.800h4.400v4.400H5.800z" fill="#fff" /></Svg>
          </div>
          <div className="ml-[6px]"><Caret /></div>
        </div>
      </div>
      <div className="flex h-[141px] w-[141px] shrink-0 items-center justify-center rounded-full bg-[radial-gradient(closest-side,#fff_0%,transparent_100%),conic-gradient(from_90deg,#f00,#ff0,#0f0,#0ff,#00f,#f0f,#f00)]">
        <Svg c="h-[9px] w-[9px]" vb="0 0 9 9"><circle cx="4.500" cy="4.500" r="4" stroke="#1a1a1a" strokeWidth="1.300" /></Svg>
      </div>
    </div>
    <div className="ml-[8px] mt-[7px] h-px w-[193px] bg-[#e8e8e8]" />
    <div className="ml-[8px] mt-[4px] grid w-[192px] grid-cols-16">
      {swatches.map((s) => <div key={s} className={`${s} h-3 w-3`} />)}
    </div>
  </div>
);

/* ---------- status bar ---------- */
const Magnifier = ({ plus = false }) => (
  <Svg><path d="m10.500 10.500 5 5" stroke="#707070" strokeWidth="2.500" /><circle cx="6.500" cy="6.500" r="5.500" stroke="#777" strokeWidth="1.600" /><path d="M3.500 6.500h6" stroke="#5f8fc0" strokeWidth="1.200" />{plus && <path d="M6.500 3.500v6" stroke="#5f8fc0" strokeWidth="1.200" />}</Svg>
);

const StatusBar = () => (
  <footer className="flex h-[25px] shrink-0 items-center bg-[#202020] pb-px text-[12px] text-[#f4f4f4]">
    <div className="ml-[1px]"><Brush /></div>
    <span className="whitespace-nowrap tracking-[-0.28px]">Left click to draw with primary color, right click to draw with secondary color.</span>
    <div className="ml-auto flex items-center">
      <Svg><path d="M6 2.500h7M11 .5l2 2-2 2M2.500 6v8M.5 12l2 2.500 2-2.500M5.500 0v5M15.500 0v5M0 5.500h5M0 15.500h5" stroke="#5485b5" /><path d="M7 7h5l3.500 3v6H7z" fill="#fff" /></Svg>
      <span className="w-[95px] whitespace-nowrap tracking-[-0.2px]">800 × 600</span>
      <Svg><path d="M5 0v9M0 4.500h10" stroke="#5485b5" /><path d="M5 4.500h11M5 4.500V16" stroke="#9bb" strokeDasharray="1 1.500" /><path d="M7 7h5l3.500 3v6H7z" fill="#fff" /></Svg>
      <span className="ml-[94px] w-[24px] pt-[1px]">px</span>
      <Svg c="h-[3px] w-[5px]" vb="0 0 5 3"><path d="M0 3h5L2.500 0z" fill="#fff" /></Svg>
      <span className="ml-[9px] w-[43px] tracking-[-0.4px]">100%</span>
      <Svg><path d="m0 0 4 4M16 0l-4 4M0 16l4-4M16 16l-4-4" stroke="#3f78b8" strokeWidth="1.700" /><path d="M3.500 3.500h9v9h-9z" fill="#fff" /><path d="m4.500 11.500 2.500-4 2 2.500 1.500-1.500 1.500 3z" fill="#3f78b8" /></Svg>
      <div className="ml-[13px]"><Magnifier /></div>
      <div className="ml-[8px]">
        <Svg c="h-[16px] w-[89px]" vb="0 0 89 16"><path d="M0 7.500h89" stroke="#e8e8e8" strokeWidth="1.300" /><path d="M40 .5h9v11L44.500 15.500 40 11.500z" fill="#e3e3e3" stroke="#999" strokeWidth=".6" /></Svg>
      </div>
      <div className="ml-[9px] mr-[18px]"><Magnifier plus /></div>
    </div>
  </footer>
);

/* Open document thumbnail that hangs over the title bar and the toolbar. */
const DocumentTab = () => (
  <>
    <div className="absolute left-[353px] top-[40px] flex h-[77px] w-[77px] flex-col border border-[#1767ab] bg-[linear-gradient(#0384cd_50px,#123c62_50px)] pl-[4px] pt-[21px]">
      <div className="h-[50px] w-[68px] bg-white" />
    </div>
    <div className="absolute left-[435px] top-[73px]">
      <Svg c="h-[9px] w-[9px]" vb="0 0 9 9"><path d="M0 0h9v5.500L6 9H3L0 5.500z" fill="#fff" /><path d="M1.500 1.500h6M2.500 4l2 2 2-2" stroke="#287d96" /></Svg>
    </div>
  </>
);

export default function App() {
  return (
    <div className="relative flex h-[1440px] w-[3440px] flex-col overflow-hidden bg-[#303030] font-['Open_Sans','Noto_Sans',sans-serif]">
      <Taskbar />
      <TitleBar />
      <div className="h-[55px] shrink-0 border-b border-[#6a6a6a] bg-[#202020]">
        <MainToolbar />
        <ToolOptions />
      </div>
      <main className="flex flex-1 px-[5px] pt-[5px]">
        <ToolWindow />
        <div className="ml-[1264px] mr-auto mt-[329px] h-[600px] w-[800px] bg-white outline outline-[#55505a]" />
        <ColorsWindow />
      </main>
      <StatusBar />
      <DocumentTab />
      <div className="absolute left-[77px] top-[45px] h-[98px] w-[49px] border border-[#d0181e]" />
    </div>
  );
}
